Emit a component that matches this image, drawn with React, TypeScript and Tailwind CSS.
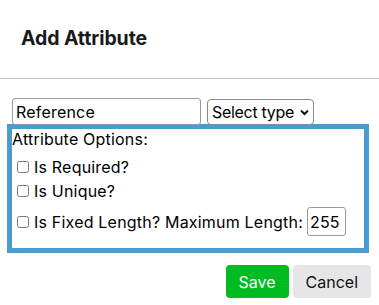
import React from 'react';

export default function App() {
    return (
        <div className="w-[379px] h-[305px] bg-white text-black" style={{ fontFamily: 'Inter, "Noto Sans", sans-serif' }}>
            <div className="h-[79px] flex items-center px-[21px] border-b border-[#c4c4c4]">
                <h2 className="text-[19.5px] font-bold text-[#1a1a1a] tracking-[-0.1px]">Add Attribute</h2>
            </div>

            <div className="pt-[19px] px-[7px]">
                <div className="flex items-center gap-[6px] pl-[5px]">
                    <input
                        type="text"
                        defaultValue="Reference"
                        className="w-[189px] h-[27px] px-[3px] border border-[#9a9a9a] rounded-[3px] text-[16px] tracking-[0.2px] text-black outline-none"
                    />
                    <div className="relative">
                        <select className="appearance-none h-[26px] w-[107px] border border-[#8a8a8a] rounded-[4px] text-[16px] tracking-[-0.3px] text-black pl-[4px] bg-white outline-none">
                            <option>Select type</option>
                        </select>
                        <svg className="absolute right-[5px] top-[10px] pointer-events-none" width="9" height="7" viewBox="0 0 9 7">
                            <path d="M1 1.5 L4.5 5 L8 1.5" fill="none" stroke="#111" strokeWidth="2" />
                        </svg>
                    </div>
                </div>

                <fieldset className="w-[362px] h-[129px] border-[5px] border-[#4a9bd0] -mt-[1px] tracking-[0.2px]">
                    <div className="text-[16px] leading-[20px]">Attribute Options:</div>
                    <label className="flex items-center gap-[5px] text-[16px] leading-[20px] mt-[8px]">
                        <input type="checkbox" className="w-[12px] h-[12px] m-0 ml-[5px]" />
                        <span>Is Required?</span>
                    </label>
                    <label className="flex items-center gap-[5px] text-[16px] leading-[20px] mt-[4px]">
                        <input type="checkbox" className="w-[12px] h-[12px] m-0 ml-[5px]" />
                        <span>Is Unique?</span>
                    </label>
                    <label className="flex items-center gap-[5px] text-[16px] leading-[20px] mt-[6px]">
                        <input type="checkbox" className="w-[12px] h-[12px] m-0 ml-[5px]" />
                        <span>Is Fixed Length? Maximum Length:</span>
                        <input
                            type="text"
                            defaultValue="255"
                            className="w-[39px] h-[29px] -ml-[1px] px-[2px] border border-[#9a9a9a] rounded-[3px] text-[16px] outline-none"
                        />
                    </label>
                </fieldset>

                <div className="flex justify-end gap-[4px] mt-[12px] pr-[1px]">
                    <button className="h-[33px] px-[13px] bg-[#00bb22] text-white text-[16px] rounded-[4px]">Save</button>
                    <button className="h-[33px] px-[13px] bg-[#e6e6e6] text-[#111] text-[16px] rounded-[4px]">Cancel</button>
                </div>
            </div>
        </div>
    );
}
